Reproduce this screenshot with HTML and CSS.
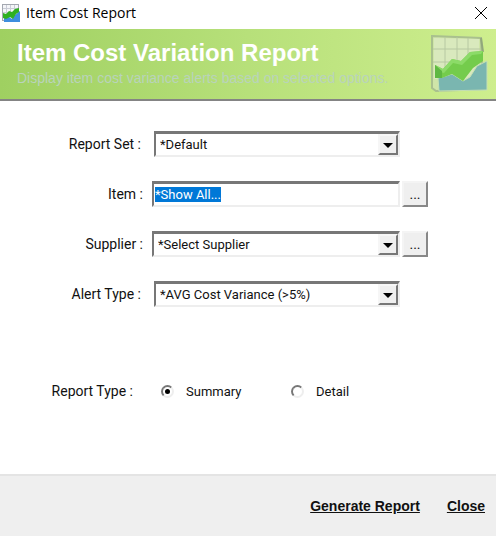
FILE: index.html
```html
<!DOCTYPE html>
<html lang="en">
<head>
    <meta charset="utf-8">
    <meta name="viewport" content="width=device-width, initial-scale=1.0">
    <title>Item Cost Report</title>
    <link rel="stylesheet" href="styles.css">
</head>
<body>
    <div class="titlebar">
        <svg class="app-icon" viewBox="0 0 18 18" aria-hidden="true">
            <rect x="0.5" y="0.5" width="16" height="16" fill="#f4f5f8" stroke="#a4a8b0"/>
            <path d="M4.500 1v12M8.500 1v10M12.500 1v8M1 4.500h15M1 8.500h15" stroke="#c9ccd6" fill="none"/>
            <path d="M2 14l5-1 3 2 3-4 5-4v11H2z" fill="#3e8ede"/>
            <path d="M1 9l3 1 3-3 3 1 3-3 4-1v4l-3 2-3 5-3-2-4 2-3-1z" fill="#2fb020"/>
        </svg>
        <span class="window-title">Item Cost Report</span>
        <button type="button" class="window-close" aria-label="Close window">
            <svg viewBox="0 0 12 12" aria-hidden="true"><path d="M0 0l12 12M12 0L0 12" stroke="#000" fill="none"/></svg>
        </button>
    </div>

    <header class="banner">
        <div class="banner-text">
            <h1>Item Cost Variation Report</h1>
            <p>Display item cost variance alerts based on selected options.</p>
        </div>
        <svg class="banner-icon" viewBox="0 0 58 58" aria-hidden="true">
            <path d="M2 1l49 2 2 51-47 2-4-3z" fill="#cfe5a8" stroke="#a9c08e" stroke-width="2"/>
            <path d="M4 3l45 1v40H4z" fill="#d9e9bd"/>
            <path d="M15 2v30M27 2v30M38 3v20M3 14h47M3 27h30" stroke="#b7c8a2" fill="none"/>
            <path d="M51 3l2 14" stroke="#91a77c" stroke-width="2" fill="none"/>
            <path d="M8 43l5-1 9-3 11 7 7-4 7-11 10-5v29L9 56z" fill="#7ab6b0" stroke="#c5e0b4"/>
            <path d="M5 30l8 4 9-10 9 2 9-9 13-1v10l-10 7-10 13-11-7-10 4H5z" fill="#74cc4c"/>
            <path d="M5 30l8 4 9-10 9 2 9-9 13-1-2 3-9 1-10 10-9-2-9 10-7-2z" fill="#8cdb68"/>
            <path d="M5 30l7 6v7H5z" fill="#5fb842"/>
        </svg>
    </header>

    <form class="report-form" id="reportForm">
        <div class="row plain">
            <label for="reportSet">Report Set :</label>
            <div class="combo">
                <select id="reportSet"><option>*Default</option></select>
                <span class="arrow"></span>
            </div>
        </div>
        <div class="row">
            <label for="item">Item :</label>
            <input type="text" class="field" id="item" value="*Show All..." autocomplete="off" spellcheck="false">
            <button type="button" class="browse" aria-label="Browse items">...</button>
        </div>
        <div class="row">
            <label for="supplier">Supplier :</label>
            <div class="combo">
                <select id="supplier"><option>*Select Supplier</option></select>
                <span class="arrow"></span>
            </div>
            <button type="button" class="browse" aria-label="Browse suppliers">...</button>
        </div>
        <div class="row plain">
            <label for="alertType">Alert Type :</label>
            <div class="combo">
                <select id="alertType"><option>*AVG Cost Variance (&gt;5%)</option></select>
                <span class="arrow"></span>
            </div>
        </div>
        <div class="types" role="radiogroup" aria-labelledby="typeLabel">
            <span class="types-label" id="typeLabel">Report Type :</span>
            <label class="choice"><input type="radio" name="reportType" checked>Summary</label>
            <label class="choice"><input type="radio" name="reportType">Detail</label>
        </div>
    </form>

    <footer class="actions">
        <button type="submit" form="reportForm">Generate Report</button>
        <button type="button">Close</button>
    </footer>

    <script>
        const item = document.getElementById('item');
        item.focus();
        item.select();
    </script>
</body>
</html>
```

FILE: styles.css
```css
* {
    box-sizing: border-box;
}

body {
    margin: 0;
    min-height: 100vh;
    display: flex;
    flex-direction: column;
    background: #fff;
    color: #111;
    font-family: Roboto, Arial, sans-serif;
    font-size: 14px;
}

button, input, select {
    font: inherit;
    color: inherit;
}

.titlebar {
    display: flex;
    align-items: center;
    height: 29px;
    padding: 0 9px 4px 2px;
}

.app-icon {
    width: 18px;
    height: 18px;
    margin-right: 6px;
}

.window-title {
    flex: 1;
    font-family: "Open Sans", "Segoe UI", sans-serif;
    font-size: 14px;
    color: #000;
}

.window-close {
    padding: 0;
    border: none;
    background: none;
}

.window-close svg {
    display: block;
    width: 12px;
    height: 12px;
}

.banner {
    display: flex;
    justify-content: space-between;
    height: 72px;
    padding: 6px 8px 0 17px;
    background: linear-gradient(to right, #9fd061, #b7e07a 50%, #ceee8e);
    border-bottom: 2px solid #848484;
    font-family: "Liberation Sans", Arial, sans-serif;
}

.banner h1 {
    margin: 0;
    font-size: 24px;
    line-height: 36px;
    color: #fff;
}

.banner p {
    margin: 0;
    font-size: 14px;
    line-height: 14px;
    color: #b9d3bb;
}

.banner-icon {
    width: 58px;
    height: 58px;
}

.report-form {
    flex: 1;
    padding: 30px 68px 24px 0;
}

.row {
    display: flex;
    align-items: center;
    height: 26px;
    margin-bottom: 24px;
}

.row label {
    width: 143px;
    margin-right: 9px;
    text-align: right;
}

.row.plain label {
    width: 141px;
    margin-right: 13px;
}

.row.plain .combo {
    margin-right: 28px;
}

.field, .combo {
    flex: 1;
    min-width: 0;
    height: 26px;
    border: 2px solid;
    border-color: #777 #eee #eee #777;
    border-top-width: 3px;
    border-radius: 0;
    background: #fff;
    font-size: 13px;
}

.field {
    padding: 0 1px;
    outline: none;
}

.field::selection {
    background: #0078d7;
    color: #fff;
}

.combo {
    position: relative;
}

.combo select {
    display: block;
    width: 100%;
    height: 21px;
    padding: 0 24px 0 4px;
    border: none;
    outline: none;
    background: none;
    appearance: none;
}

.arrow {
    position: absolute;
    top: 0;
    right: 0;
    width: 20px;
    height: 21px;
    border: 2px solid;
    border-color: #f6f6f6 #777 #777 #f6f6f6;
    background: #efefef;
    pointer-events: none;
}

.arrow::after {
    content: "";
    display: block;
    margin: 7px auto 0;
    width: 10px;
    height: 5px;
    background: #000;
    clip-path: polygon(0 0, 100% 0, 50% 100%);
}

.browse {
    width: 26px;
    height: 26px;
    margin-left: 2px;
    padding: 0;
    border: 2px solid;
    border-color: #f4f4f4 #888 #888 #f4f4f4;
    background: #efefef;
}

.types {
    display: flex;
    align-items: center;
    height: 20px;
    margin-top: 74px;
}

.types-label {
    width: 133px;
    margin-right: 28px;
    text-align: right;
}

.choice {
    display: flex;
    align-items: center;
    width: 130px;
    font-size: 13px;
}

.choice input {
    display: grid;
    place-items: center;
    width: 13px;
    height: 13px;
    margin: 0 12px 0 0;
    border: 2px solid;
    border-color: #777 #eee #eee #777;
    border-radius: 50%;
    background: #fff;
    appearance: none;
}

.choice input:checked::before {
    content: "";
    width: 5px;
    height: 5px;
    border-radius: 50%;
    background: #000;
}

.actions {
    display: flex;
    justify-content: flex-end;
    align-items: center;
    gap: 27px;
    height: 62px;
    padding: 0 11px 0 0;
    background: #efefef;
    border-top: 2px solid #e4e4e4;
    font-family: "Liberation Sans", Arial, sans-serif;
}

.actions button {
    padding: 0;
    border: none;
    background: none;
    font-size: 14px;
    font-weight: bold;
    text-decoration: underline;
}
```
